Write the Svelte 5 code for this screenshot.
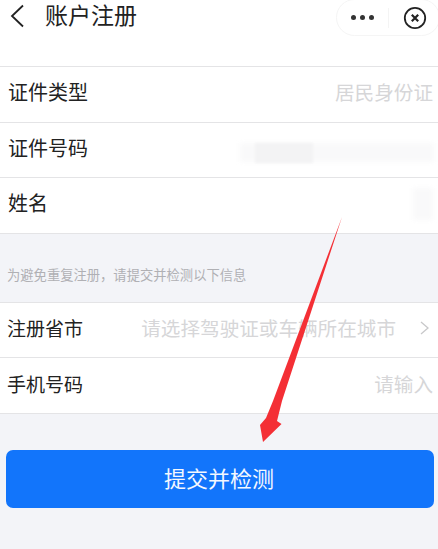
<script>
    const top_rows = [
        {label: '证件类型', value: '居民身份证'},
        {label: '证件号码', value: ''},
        {label: '姓名', value: ''}
    ];
</script>

<div class="page">
    <header class="nav">
        <svg class="back" width="16" height="24" viewBox="0 0 16 24">
            <path d="M14 1.500 L3 12 L14 22.500" fill="none" stroke="#222" stroke-width="1.800"/>
        </svg>
        <h1>账户注册</h1>
        <div class="capsule">
            <span class="dots"><i></i><i></i><i></i></span>
            <span class="divider"></span>
            <svg width="24" height="24" viewBox="0 0 24 24">
                <circle cx="12" cy="12" r="10.200" fill="none" stroke="#222" stroke-width="1.800"/>
                <path d="M8.800 8.800 L15.200 15.200 M15.200 8.800 L8.800 15.200" stroke="#222" stroke-width="2.200"/>
            </svg>
        </div>
    </header>

    <section class="group first">
        {#each top_rows as row}
            <div class="row">
                <span class="label">{row.label}</span>
                <span class="placeholder">{row.value}</span>
            </div>
        {/each}
    </section>

    <p class="hint">为避免重复注册，请提交并检测以下信息</p>

    <section class="group second">
        <div class="row">
            <span class="label">注册省市</span>
            <span class="placeholder">请选择驾驶证或车辆所在城市</span>
            <svg class="chevron" width="9" height="14" viewBox="0 0 9 14">
                <path d="M1 1 L8 7 L1 13" fill="none" stroke="#c8c8ca" stroke-width="1.300"/>
            </svg>
        </div>
        <div class="row">
            <span class="label">手机号码</span>
            <span class="placeholder">请输入</span>
        </div>
    </section>

    <button class="submit">提交并检测</button>

    <!-- smudges over the redacted values -->
    <div class="smudge id-light"></div>
    <div class="smudge id-dark"></div>
    <div class="smudge name"></div>

    <!-- red annotation arrow drawn on top of the screenshot -->
    <svg class="arrow" width="438" height="549" viewBox="0 0 438 549">
        <path d="M342 217 L282 401 L277 421 L281.500 424 L263 442 L260 425 L266 418 L273 401 Z" fill="#f42f35"/>
    </svg>
</div>

<style>
    :global(body) {
        margin: 0;
    }

    .page {
        position: relative;
        width: 438px;
        height: 549px;
        overflow: hidden;
        background: #f3f4f8;
        font-family: "Noto Sans CJK SC", "Liberation Sans", sans-serif;
        color: #222;
    }

    .nav {
        display: flex;
        align-items: flex-start;
        height: 66px;
        background: #fff;
        box-sizing: border-box;
    }

    .back {
        margin: 4px 0 0 9px;
    }

    h1 {
        margin: 0 0 0 20px;
        font-size: 23px;
        font-weight: 400;
        line-height: 29px;
    }

    .capsule {
        display: flex;
        align-items: center;
        box-sizing: border-box;
        width: 104px;
        height: 37px;
        margin: -1px -2px 0 auto;
        padding-left: 14px;
        border: 1px solid #f5f5f5;
        border-radius: 19px;
        background: #fff;
    }

    .dots {
        display: flex;
        gap: 4px;
    }

    .dots i {
        width: 5px;
        height: 5px;
        border-radius: 50%;
        background: #333;
    }

    .divider {
        width: 1px;
        height: 20px;
        margin: 0 14px;
        background: #f4f4f4;
    }

    .group {
        background: #fff;
        border-top: 1px solid #e4e4e6;
    }

    .row {
        display: flex;
        align-items: center;
        box-sizing: border-box;
        height: 55.500px;
        padding-right: 5px;
        border-bottom: 1px solid #e4e4e6;
    }

    .first .row {
        padding-left: 8px;
        padding-bottom: 4px;
    }

    .second .row {
        padding-left: 7px;
        padding-bottom: 3px;
    }

    .label {
        font-size: 20px;
        line-height: 28px;
        color: #222;
    }

    .second .label {
        font-size: 19px;
    }

    .placeholder {
        margin-left: auto;
        font-size: 19.600px;
        line-height: 28px;
        color: #d6d6d8;
    }

    .chevron {
        margin: 0 4px 0 24px;
    }

    .hint {
        display: flex;
        align-items: flex-end;
        box-sizing: border-box;
        height: 68px;
        margin: 0;
        padding: 0 0 17px 7px;
        font-size: 13.300px;
        line-height: 20px;
        color: #b0b0b4;
    }

    .submit {
        display: block;
        width: 428px;
        height: 58px;
        margin: 36px 0 0 6px;
        padding: 0 2px 3px 0;
        border: 0;
        border-radius: 7px;
        background: #1275fb;
        color: #f4f8ff;
        font: inherit;
        font-size: 22px;
    }

    .smudge {
        position: absolute;
        background: #f3f3f4;
        filter: blur(2px);
    }

    .id-light {
        left: 240px;
        top: 143px;
        width: 194px;
        height: 19px;
        background: #f9f9fa;
    }

    .id-dark {
        left: 255px;
        top: 143px;
        width: 58px;
        height: 20px;
        filter: blur(1px);
    }

    .name {
        left: 413px;
        top: 188px;
        width: 20px;
        height: 32px;
        background: #f9f9fa;
    }

    .arrow {
        position: absolute;
        left: 0;
        top: 0;
        pointer-events: none;
    }
</style>
